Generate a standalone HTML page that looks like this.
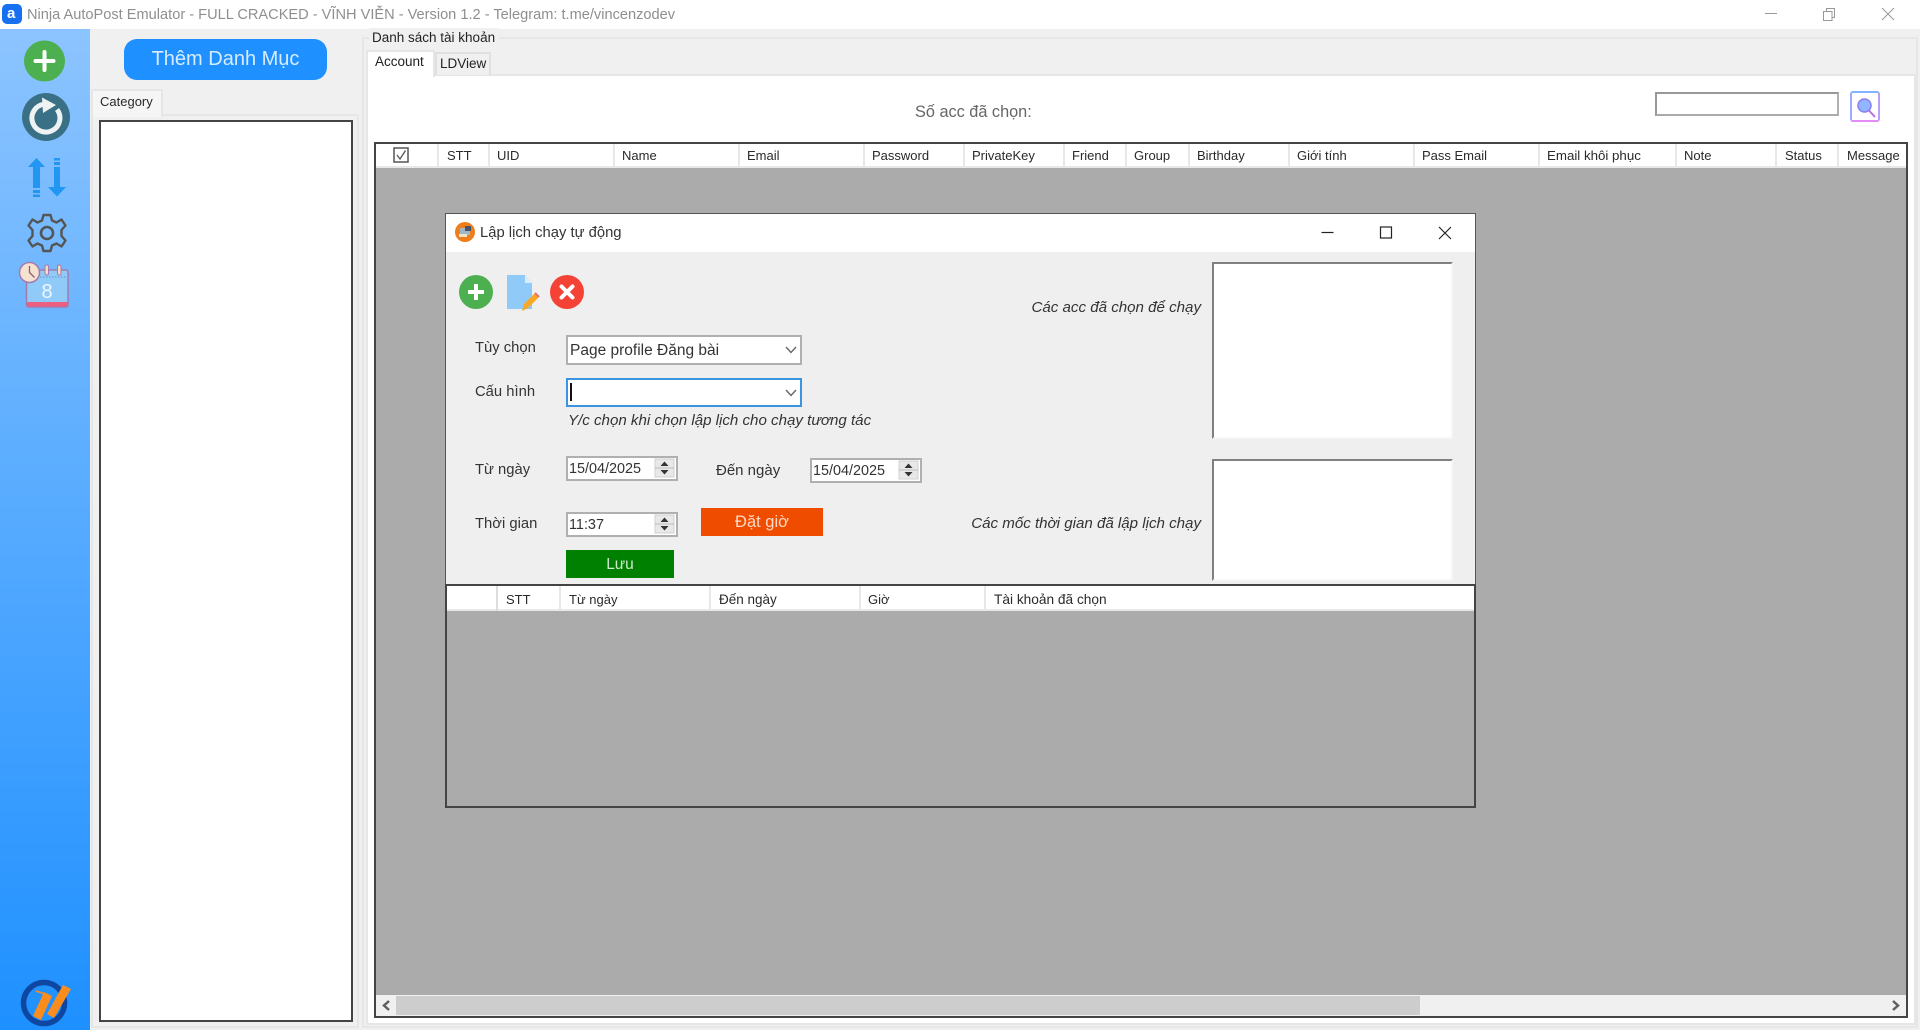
<!DOCTYPE html>
<html lang="vi"><head><meta charset="utf-8"><title>Ninja AutoPost Emulator</title>
<style>
html,body{margin:0;padding:0;width:1920px;height:1030px;overflow:hidden;background:#f0f0f0}
body{position:relative;font-family:"Liberation Sans","Noto Sans CJK SC",sans-serif;color:#222}
.a{position:absolute;box-sizing:border-box}
.t{position:absolute;white-space:nowrap;line-height:20px;height:20px}
.h{font-size:13px;color:#2a2a2a}
.l{font-size:14.8px;color:#333}
.i{font-style:italic;font-size:15.1px;color:#333}
.inp{position:absolute;box-sizing:border-box;background:#fff;border:2px solid #b0b0b0}
.sep{position:absolute;width:2px;background:#e8e8e8}
svg{position:absolute;overflow:visible}
</style></head><body>

<!-- title bar -->
<div class="a" style="left:0;top:0;width:1920px;height:29px;background:#fff"></div>
<div class="a" style="left:2px;top:4px;width:20px;height:20px;border-radius:5px;background:#1670f0"></div>
<div class="t" style="left:7px;top:4px;font-size:15px;font-weight:bold;color:#fff">a</div>
<div class="t" style="left:27px;top:5px;font-size:14.6px;color:#8f8f8f">Ninja AutoPost Emulator - FULL CRACKED - VĨNH VIỄN - Version 1.2 - Telegram: t.me/vincenzodev</div>
<svg style="left:0;top:0" width="1920" height="29" fill="none" stroke="#999" stroke-width="1">
<path d="M1765 13.500H1777"/>
<path d="M1823.500 11.500H1832V20.500H1823.500Z M1826.500 11.500V8.500H1834.500V17.500H1832"/>
<path d="M1882 8L1894 20M1894 8L1882 20"/>
</svg>

<!-- sidebar -->
<div class="a" style="left:0;top:29px;width:90px;height:1001px;background:linear-gradient(#8cc4ff,#1e90ff)"></div>
<svg style="left:0;top:0" width="90" height="1030">
<circle cx="44.500" cy="61" r="20.500" fill="#4caf50"/>
<path d="M35.500 61H53.500M44.500 52V70" stroke="#fff" stroke-width="4" stroke-linecap="round"/>
<circle cx="46" cy="117" r="24" fill="#3a7086"/>
<path d="M57 109.500A14 14 0 1 1 44 104.200" fill="none" stroke="#eef2f2" stroke-width="5"/>
<path d="M42 97.500L56 105L43 113Z" fill="#eef2f2"/>
<g fill="#2196f3">
<path d="M36.500 158L45 167H40V188H33V167H28Z"/><path d="M33 190H40V193H33ZM33 194.500H40V197H33Z"/>
<path d="M54 158H60V160.500H54ZM54 162H60V165H54ZM54 167H60V187H66L57 196.500L48 187H54Z"/>
</g>
<g fill="none" stroke="#555">
<circle cx="47" cy="233" r="6" stroke-width="2.600"/>
<path stroke-width="2.400" stroke-linejoin="round" d="M43.500 215H50.500L52 220.500L56.500 222.500L61.500 219.500L65.500 225.500L61.500 230V236L65.500 240.500L61.500 246.500L56.500 243.500L52 245.500L50.500 251H43.500L42 245.500L37.500 243.500L32.500 246.500L28.500 240.500L32.500 236V230L28.500 225.500L32.500 219.500L37.500 222.500L42 220.500Z"/>
</g>
<rect x="26.500" y="270" width="41.500" height="37" rx="2" fill="#90caf9" stroke="#a67bab" stroke-width="1.500"/>
<path d="M40 277H67" stroke="#6f9fd0" stroke-width="1.200" stroke-dasharray="1.500 1.500"/>
<rect x="27" y="302" width="40.500" height="4.500" fill="#ec5f80"/>
<rect x="45" y="265" width="3.500" height="10" rx="1.500" fill="#f3dcc0" stroke="#a67bab"/>
<rect x="57.500" y="265" width="3.500" height="10" rx="1.500" fill="#f3dcc0" stroke="#a67bab"/>
<circle cx="29.500" cy="272.500" r="10" fill="#f6e2d0" stroke="#a67bab" stroke-width="1.500"/>
<path d="M29.500 266V272.500L34.500 277.500" fill="none" stroke="#8a5f70" stroke-width="1.300"/>
<text x="47" y="298" font-size="20" fill="#eef7ff" text-anchor="middle" font-family="Liberation Sans">8</text>
<circle cx="44" cy="1003" r="20.500" fill="none" stroke="#0d47a1" stroke-width="5.500"/>
<g fill="#fb8c1e"><path d="M44 992L52 996L41 1020L33 1016Z"/><path d="M63 985L71 989L54 1018L47 1014Z"/></g>
<path d="M36 991L45 994" stroke="#fb8c1e" stroke-width="1.500"/>
</svg>

<!-- left panel -->
<div class="a" style="left:124px;top:39px;width:203px;height:41px;border-radius:13px;background:#1e90ff"></div>
<div class="t" style="left:124px;width:203px;top:49px;text-align:center;font-size:20px;color:#d8ecff">Thêm Danh Mục</div>
<div class="a" style="left:91px;top:114px;width:268px;height:914px;border:2px solid #e6e6e6"></div>
<div class="a" style="left:91px;top:89px;width:72px;height:28px;background:#f5f5f5;border:2px solid #e6e6e6;border-bottom:none"></div>
<div class="t h" style="left:100px;top:92px">Category</div>
<div class="a" style="left:99px;top:120px;width:254px;height:902px;background:#fff;border:2px solid #444"></div>

<!-- group + tabs -->
<div class="a" style="left:362px;top:37px;width:1556px;height:991px;border:2px solid #e6e6e6"></div>
<div class="a" style="left:369px;top:28px;width:130px;height:20px;background:#f0f0f0"></div>
<div class="t" style="left:372px;top:28px;font-size:13.500px;color:#222">Danh sách tài khoản</div>
<div class="a" style="left:366px;top:74px;width:1550px;height:951px;background:#fff;border:2px solid #e6e6e6"></div>
<div class="a" style="left:435px;top:52px;width:56px;height:23px;background:#f0f0f0;border:2px solid #e0e0e0;border-bottom:none"></div>
<div class="a" style="left:366px;top:50px;width:69px;height:27px;background:#fff;border:2px solid #e6e6e6;border-bottom:none"></div>
<div class="t" style="left:375px;top:52px;font-size:13.500px;color:#222">Account</div>
<div class="t" style="left:440px;top:54px;font-size:13.500px;color:#222">LDView</div>

<div class="t" style="left:915px;top:102px;font-size:16.300px;color:#666">Số acc đã chọn:</div>
<div class="inp" style="left:1655px;top:92px;width:184px;height:24px;border-color:#999 #b0b0b0 #aaa #999"></div>
<div class="a" style="left:1850px;top:91px;width:30px;height:31px;border-radius:3px;border:2px solid;border-color:#7fb4ff #b9a0f5 #e58bf5 #a0a8ff;background:#fff"></div>
<svg style="left:1850px;top:91px" width="30" height="31">
<circle cx="14.500" cy="14.500" r="6.500" fill="#8fb6ff" stroke="#8a7df0" stroke-width="1.500"/>
<path d="M19 19.500L25 26" stroke="#b56fe8" stroke-width="2"/>
</svg>

<!-- main grid -->
<div class="a" style="left:374px;top:142px;width:1534px;height:876px;background:#ababab;border:2px solid #444"></div>
<div class="a" style="left:376px;top:144px;width:1530px;height:24px;background:#fff;border-bottom:2px solid #e8e8e8"></div>
<div class="sep" style="left:437px;top:144px;height:24px"></div>
<div class="sep" style="left:488px;top:144px;height:24px"></div>
<div class="sep" style="left:613px;top:144px;height:24px"></div>
<div class="sep" style="left:738px;top:144px;height:24px"></div>
<div class="sep" style="left:863px;top:144px;height:24px"></div>
<div class="sep" style="left:963px;top:144px;height:24px"></div>
<div class="sep" style="left:1063px;top:144px;height:24px"></div>
<div class="sep" style="left:1125px;top:144px;height:24px"></div>
<div class="sep" style="left:1188px;top:144px;height:24px"></div>
<div class="sep" style="left:1288px;top:144px;height:24px"></div>
<div class="sep" style="left:1413px;top:144px;height:24px"></div>
<div class="sep" style="left:1538px;top:144px;height:24px"></div>
<div class="sep" style="left:1675px;top:144px;height:24px"></div>
<div class="sep" style="left:1775px;top:144px;height:24px"></div>
<div class="sep" style="left:1837px;top:144px;height:24px"></div>
<svg style="left:393px;top:147px" width="16" height="16"><rect x="1" y="1" width="14" height="14" fill="#fff" stroke="#555" stroke-width="1.500"/><path d="M4 8L7 12L12.500 3.500" fill="none" stroke="#555" stroke-width="1.300"/></svg>
<div class="t h" style="left:447px;top:146px">STT</div>
<div class="t h" style="left:497px;top:146px">UID</div>
<div class="t h" style="left:622px;top:146px">Name</div>
<div class="t h" style="left:747px;top:146px">Email</div>
<div class="t h" style="left:872px;top:146px">Password</div>
<div class="t h" style="left:972px;top:146px">PrivateKey</div>
<div class="t h" style="left:1072px;top:146px">Friend</div>
<div class="t h" style="left:1134px;top:146px">Group</div>
<div class="t h" style="left:1197px;top:146px">Birthday</div>
<div class="t h" style="left:1297px;top:146px">Giới tính</div>
<div class="t h" style="left:1422px;top:146px">Pass Email</div>
<div class="t h" style="left:1547px;top:146px;font-size:13.300px">Email khôi phục</div>
<div class="t h" style="left:1684px;top:146px">Note</div>
<div class="t h" style="left:1785px;top:146px">Status</div>
<div class="t h" style="left:1847px;top:146px">Message</div>
<!-- scrollbar -->
<div class="a" style="left:376px;top:995px;width:1530px;height:21px;background:#f0f0f0"></div>
<div class="a" style="left:396px;top:996px;width:1024px;height:19px;background:#cdcdcd"></div>
<svg style="left:376px;top:995px" width="1530" height="21" fill="none" stroke="#606060" stroke-width="2.500"><path d="M13 6L8 10.500L13 15"/><path d="M1517 6L1522 10.500L1517 15"/></svg>

<!-- dialog -->
<div class="a" style="left:445px;top:213px;width:1031px;height:595px;background:#efefef;border:1px solid #555"></div>
<div class="a" style="left:446px;top:214px;width:1029px;height:38px;background:#fff"></div>
<svg style="left:455px;top:222px" width="20" height="20"><circle cx="10" cy="10" r="10" fill="#ee7d1c"/><rect x="5" y="6" width="10" height="7" fill="#9db7c8"/><rect x="10" y="4" width="6" height="5" fill="#44556a"/><rect x="4" y="12" width="8" height="3" fill="#f4e2c8"/></svg>
<div class="t" style="left:480px;top:223px;font-size:14.800px;color:#333">Lập lịch chạy tự động</div>
<svg style="left:1300px;top:215px" width="170" height="36" fill="none" stroke="#222" stroke-width="1.200">
<path d="M21.500 17.500H33.500"/><rect x="80.500" y="12" width="11" height="11"/><path d="M139 12L151 24M151 12L139 24"/>
</svg>

<svg style="left:455px;top:272px" width="130" height="42">
<circle cx="21" cy="20" r="17" fill="#4caf50"/><path d="M13 20H29M21 12V28" stroke="#fff" stroke-width="4"/>
<path d="M52 3H70L77 11V37H52Z" fill="#90caf9"/><path d="M70 3L77 11H70Z" fill="#dcecfa"/>
<path d="M67 39L69 32L80 21L84 25L73 36Z" fill="#f9a825"/><path d="M80 21L84 25" stroke="#e57373" stroke-width="2"/>
<circle cx="112" cy="20" r="17" fill="#f44336"/><path d="M106.500 14.500L117.500 25.500M117.500 14.500L106.500 25.500" stroke="#fff" stroke-width="4" stroke-linecap="round"/>
</svg>

<div class="t l" style="left:475px;top:338px">Tùy chọn</div>
<div class="inp" style="left:566px;top:335px;width:236px;height:30px"></div>
<div class="t" style="left:570px;top:341px;font-size:15.500px;color:#333">Page profile Đăng bài</div>
<svg style="left:785px;top:345px" width="12" height="10" fill="none" stroke="#666" stroke-width="1.400"><path d="M1 2L6 7.500L11 2"/></svg>

<div class="t l" style="left:475px;top:382px">Cấu hình</div>
<div class="inp" style="left:566px;top:378px;width:236px;height:29px;border-color:#3c93e0"></div>
<div class="a" style="left:570px;top:383px;width:1.500px;height:18px;background:#111"></div>
<svg style="left:785px;top:388px" width="12" height="10" fill="none" stroke="#666" stroke-width="1.400"><path d="M1 2L6 7.500L11 2"/></svg>
<div class="t i" style="left:568px;top:411px">Y/c chọn khi chọn lập lịch cho chạy tương tác</div>

<div class="t l" style="left:475px;top:460px">Từ ngày</div>
<div class="inp" style="left:566px;top:456px;width:112px;height:25px"></div>
<div class="t" style="left:569px;top:459px;font-size:14.400px;color:#333">15/04/2025</div>
<svg style="left:655px;top:459px" width="19" height="18"><rect width="19" height="18" fill="#e8e8e8" stroke="#d0d0d0"/><path d="M0 9H19" stroke="#bbb"/><path d="M9.500 2.500L13.500 7H5.500Z M9.500 15.500L13.500 11H5.500Z" fill="#333"/></svg>

<div class="t l" style="left:716px;top:461px;font-size:15px">Đến ngày</div>
<div class="inp" style="left:810px;top:458px;width:112px;height:25px"></div>
<div class="t" style="left:813px;top:461px;font-size:14.400px;color:#333">15/04/2025</div>
<svg style="left:899px;top:461px" width="19" height="18"><rect width="19" height="18" fill="#e8e8e8" stroke="#d0d0d0"/><path d="M0 9H19" stroke="#bbb"/><path d="M9.500 2.500L13.500 7H5.500Z M9.500 15.500L13.500 11H5.500Z" fill="#333"/></svg>

<div class="t l" style="left:475px;top:514px">Thời gian</div>
<div class="inp" style="left:566px;top:512px;width:112px;height:25px"></div>
<div class="t" style="left:569px;top:515px;font-size:14.400px;color:#333">11:37</div>
<svg style="left:655px;top:515px" width="19" height="18"><rect width="19" height="18" fill="#e8e8e8" stroke="#d0d0d0"/><path d="M0 9H19" stroke="#bbb"/><path d="M9.500 2.500L13.500 7H5.500Z M9.500 15.500L13.500 11H5.500Z" fill="#333"/></svg>

<div class="a" style="left:701px;top:508px;width:122px;height:28px;background:#ef4c00"></div>
<div class="t" style="left:701px;width:122px;top:512px;text-align:center;font-size:16.500px;color:#ffd9c4">Đặt giờ</div>
<div class="a" style="left:566px;top:550px;width:108px;height:28px;background:#008000"></div>
<div class="t" style="left:566px;width:108px;top:555px;text-align:center;font-size:15.500px;color:#cfe8cf">Lưu</div>

<div class="t i" style="right:719px;top:298px">Các acc đã chọn để chạy</div>
<div class="t i" style="right:719px;top:514px">Các mốc thời gian đã lập lịch chạy</div>
<div class="a" style="left:1212px;top:262px;width:241px;height:177px;background:#fff;border:2px solid #f6f6f6;border-top-color:#808080;border-left-color:#808080"></div>
<div class="a" style="left:1212px;top:459px;width:241px;height:122px;background:#fff;border:2px solid #f6f6f6;border-top-color:#808080;border-left-color:#808080"></div>

<!-- inner grid -->
<div class="a" style="left:445px;top:584px;width:1031px;height:224px;background:#ababab;border:2px solid #444"></div>
<div class="a" style="left:447px;top:586px;width:1027px;height:25px;background:#fff;border-bottom:2px solid #e8e8e8"></div>
<div class="sep" style="left:496px;top:586px;height:25px;background:#ddd"></div>
<div class="sep" style="left:559px;top:586px;height:25px"></div>
<div class="sep" style="left:709px;top:586px;height:25px"></div>
<div class="sep" style="left:859px;top:586px;height:25px"></div>
<div class="sep" style="left:984px;top:586px;height:25px"></div>
<div class="t h" style="left:506px;top:590px">STT</div>
<div class="t h" style="left:569px;top:590px">Từ ngày</div>
<div class="t h" style="left:719px;top:590px;font-size:13.500px">Đến ngày</div>
<div class="t h" style="left:868px;top:590px">Giờ</div>
<div class="t h" style="left:994px;top:590px;font-size:13.700px">Tài khoản đã chọn</div>

</body></html>
